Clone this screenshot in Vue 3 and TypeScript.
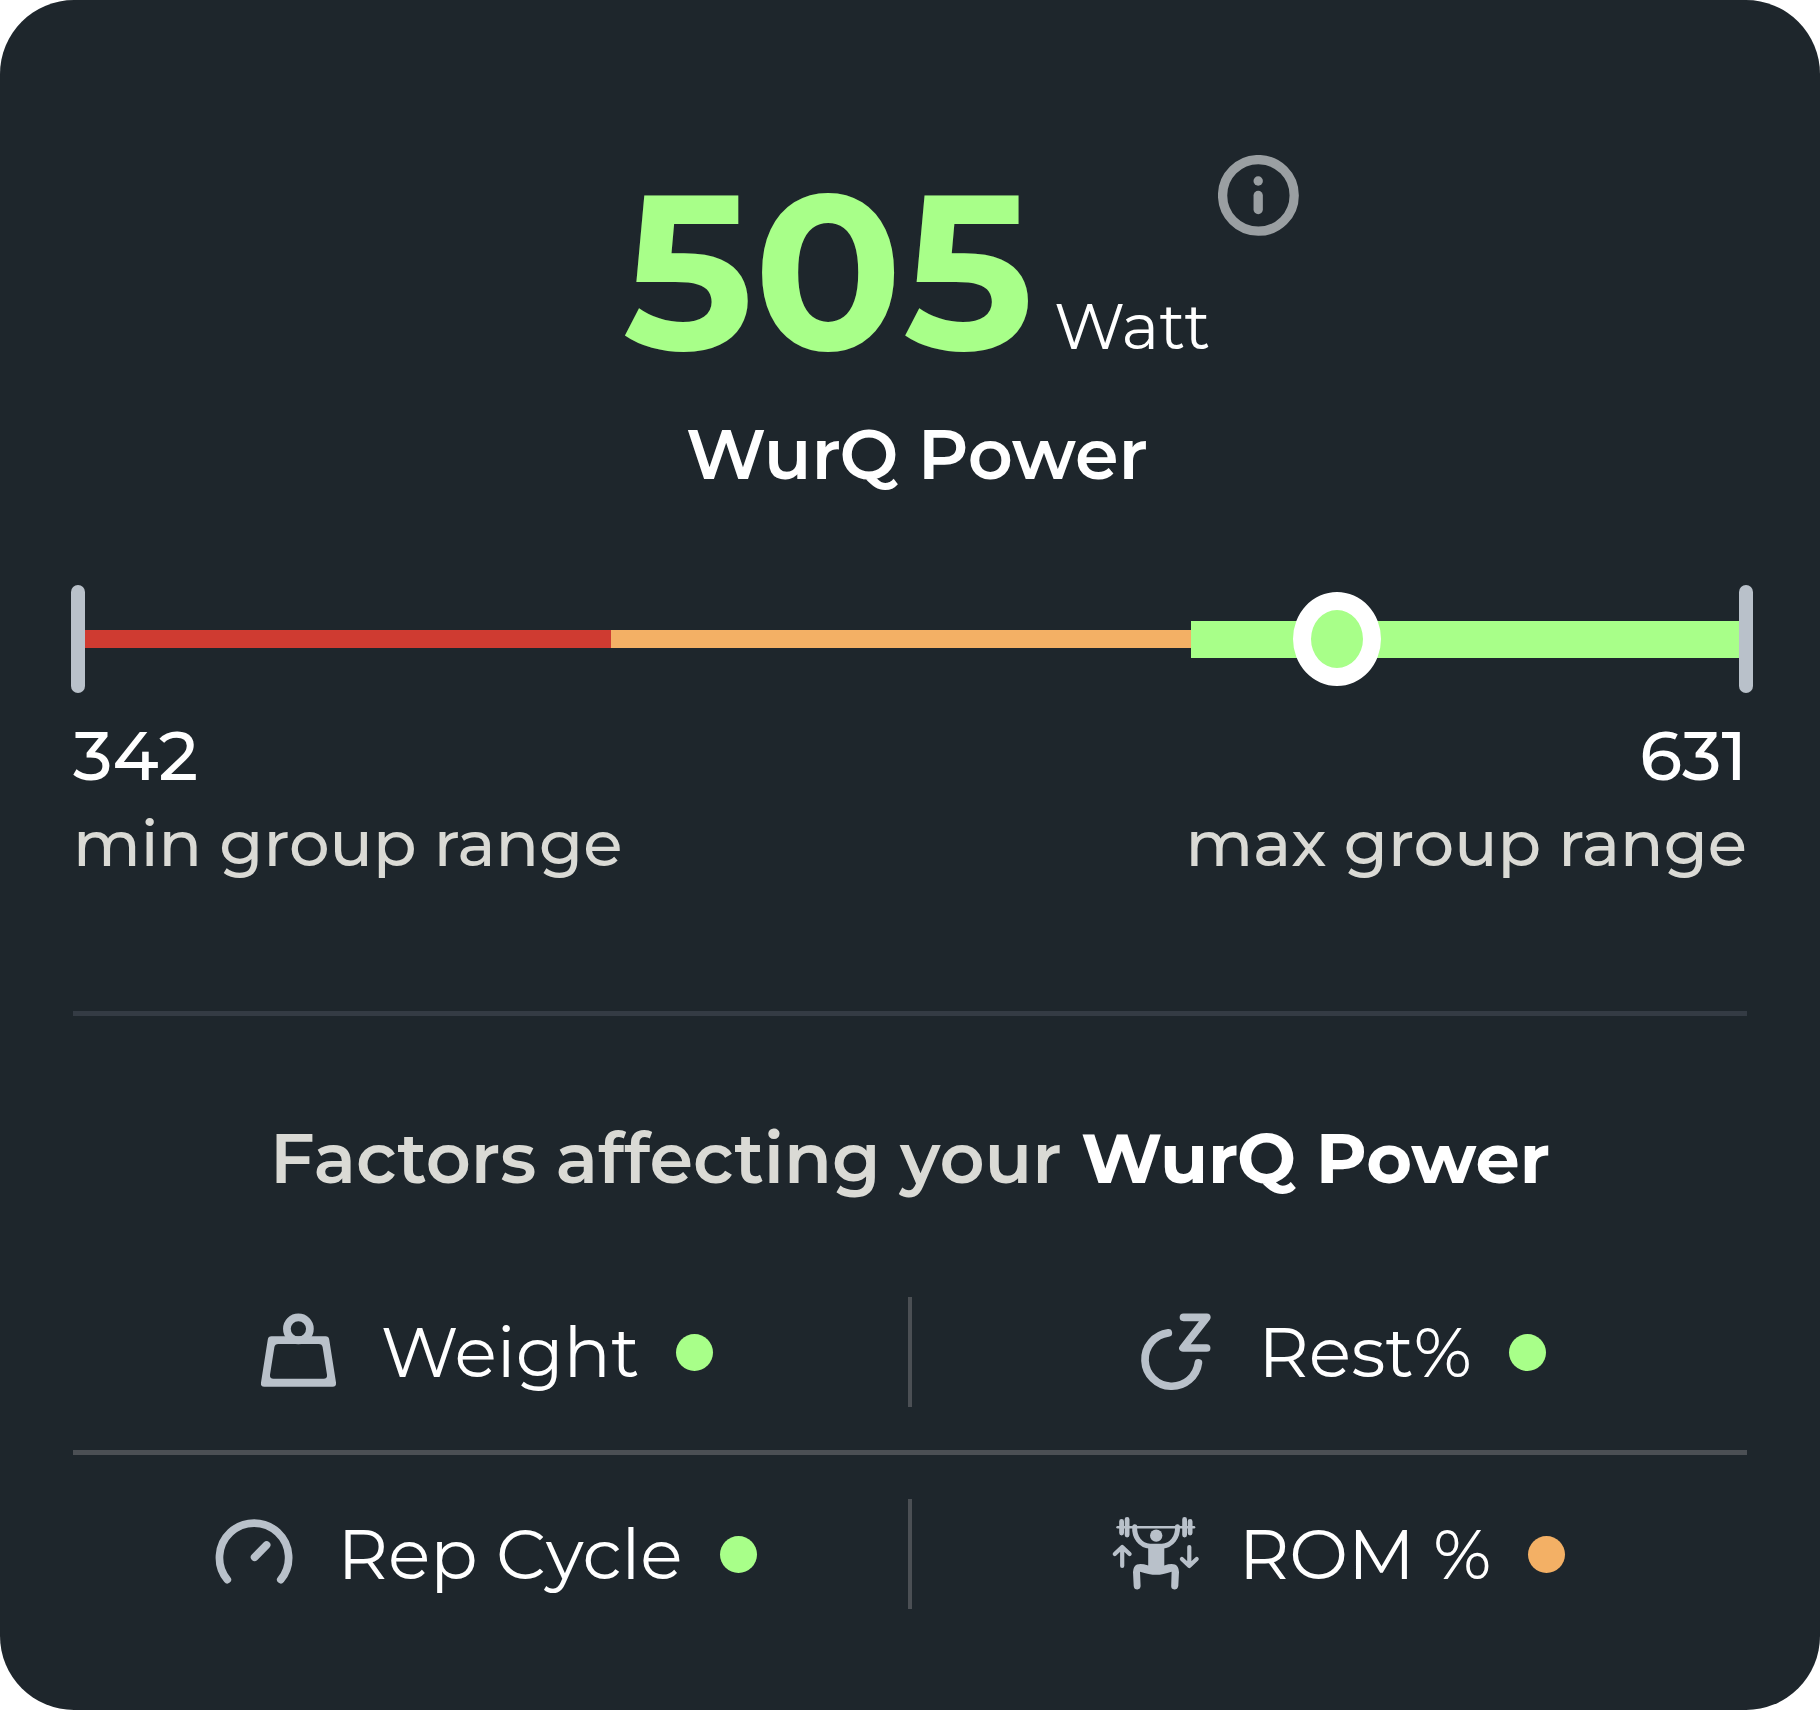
<script setup lang="ts">
type IconName = 'weight' | 'rest' | 'cycle' | 'rom'

interface Factor {
  label: string
  icon: IconName
  status: 'good' | 'fair'
}

const factorRows: Factor[][] = [
  [
    { label: 'Weight', icon: 'weight', status: 'good' },
    { label: 'Rest%', icon: 'rest', status: 'good' },
  ],
  [
    { label: 'Rep Cycle', icon: 'cycle', status: 'good' },
    { label: 'ROM %', icon: 'rom', status: 'fair' },
  ],
]

const power = 505
const range = { min: 342, max: 631 }
// Where the marker sits along the scale, in percent
const position = 76.65
</script>

<template>
  <main class="card">
    <header class="hero">
      <p class="reading">
        <span class="value">{{ power }}</span>
        <span class="unit">Watt</span>
      </p>
      <button class="info" type="button" aria-label="About WurQ Power">
        <svg viewBox="18 15 81 81" fill="none" stroke="currentColor" stroke-width="9.3" stroke-linecap="round">
          <circle cx="58.4" cy="55.4" r="35.8" />
          <circle cx="58.2" cy="41" r="4.7" fill="currentColor" stroke="none" />
          <path d="M58.2 55.5V69.5" />
        </svg>
      </button>
    </header>
    <h1 class="title">WurQ Power</h1>

    <div class="scale">
      <span class="tick"></span>
      <span class="segment low"></span>
      <span class="segment mid"></span>
      <span class="segment high"></span>
      <span class="tick"></span>
      <input class="marker" type="range" min="0" max="100" step="any" :value="position" aria-label="WurQ Power within group range" />
    </div>

    <div class="limits">
      <div class="limit">
        <span class="number">{{ range.min }}</span>
        <span class="caption">min group range</span>
      </div>
      <div class="limit end">
        <span class="number">{{ range.max }}</span>
        <span class="caption">max group range</span>
      </div>
    </div>

    <hr class="divider" />

    <h2 class="heading">Factors affecting your <strong>WurQ Power</strong></h2>

    <section class="factors">
      <template v-for="(row, index) in factorRows" :key="index">
        <hr v-if="index > 0" class="divider light" />
        <ul class="row">
          <li v-for="factor in row" :key="factor.label" class="factor">
            <svg v-if="factor.icon === 'weight'" class="icon" viewBox="12 16 92 92">
              <circle cx="58.4" cy="38.8" r="11.5" fill="none" stroke="currentColor" stroke-width="7.7" />
              <path
                fill="currentColor"
                fill-rule="evenodd"
                d="M31.5 46.3H85.5Q88.7 46.3 89.2 49.5L96 92.5Q96.5 96.8 92.5 96.8H24.3Q20.4 96.8 21 92.5L27.8 49.5Q28.3 46.3 31.5 46.3ZM38.3 54Q35 54 34.4 57L30 84.8Q29.5 88.7 33.5 88.7H83.5Q87.5 88.7 87 84.8L82.6 57Q82 54 78.7 54Z"
              />
            </svg>
            <svg v-else-if="factor.icon === 'rest'" class="icon" viewBox="9 16 92 92" fill="none" stroke="currentColor" stroke-width="7.7" stroke-linecap="round" stroke-linejoin="round">
              <path d="M48.3 42.9A26.8 26.8 0 1 0 78.4 72.8" />
              <path d="M63.5 27.3H86.8L63 58H86.6" />
            </svg>
            <svg v-else-if="factor.icon === 'cycle'" class="icon" viewBox="9 8 92 92" fill="none" stroke="currentColor" stroke-width="7.7" stroke-linecap="round">
              <path d="M28.3 79.6A34.6 34.6 0 1 1 81.8 79.6" />
              <path d="M55.6 57.2L67.6 45" />
            </svg>
            <svg v-else class="icon" viewBox="11 8 92 92" fill="none" stroke="currentColor" stroke-linecap="round" stroke-linejoin="round">
              <path stroke-width="2.6" d="M18.6 27.3H95" />
              <path stroke-width="4.8" d="M22.6 21.5V33M28.1 19.5V35M85.6 19.5V35M91.1 21.5V33" />
              <path stroke-width="5" d="M35.7 26.7C35 37 41 45.5 51 46.3H63C73 45.5 79 37 78.5 26.7" />
              <circle cx="57.2" cy="35.6" r="6.2" fill="currentColor" stroke="none" />
              <path fill="currentColor" stroke="none" d="M49.2 44H65.3V65.5Q72 63.3 76 64.6Q79.5 66 80 72L79.3 86Q78.5 89.6 75.3 89.5Q72 89 72.2 86L72.6 71.7Q64 74.8 57.2 74.8Q50 74.8 41 71.7L41.6 86Q41.5 89 38.4 89.5Q35 89.5 34.7 86L34 72Q34.5 66 38 64.6Q42 63.3 49.2 65.5Z" />
              <path stroke-width="4.2" d="M23.2 66V47.5M15.8 54L23.2 47L30.6 54M90.3 47V66M82.9 59L90.3 66L97.7 59" />
            </svg>
            <span class="name">{{ factor.label }}</span>
            <span class="dot" :class="factor.status"></span>
          </li>
        </ul>
      </template>
    </section>
  </main>
</template>

<style>
body {
  margin: 0;
  background: #ffffff;
}
</style>

<style scoped>
.card {
  box-sizing: border-box;
  min-height: 100vh;
  padding: 155px 73px 96px;
  border-radius: 74px;
  background: #1e262c;
  color: #ffffff;
  font-family: Montserrat, Inter, sans-serif;
}

.hero {
  display: flex;
  justify-content: center;
  align-items: flex-start;
  gap: 8px;
  padding-left: 102px;
}

.reading {
  display: flex;
  align-items: baseline;
  gap: 20px;
  margin: 35px 0 0;
}

.value {
  color: #a8ff89;
  font-size: 220px;
  font-weight: 700;
  line-height: 160px;
}

.unit {
  font-size: 64px;
  font-weight: 400;
  line-height: 48px;
}

.info {
  width: 81px;
  height: 81px;
  padding: 0;
  border: 0;
  background: none;
  color: #9a9fa2;
}

.info svg {
  display: block;
}

.title {
  margin: 64px 0 0;
  padding-left: 14px;
  font-size: 70px;
  font-weight: 600;
  line-height: 80px;
  text-align: center;
}

.scale {
  position: relative;
  display: flex;
  align-items: center;
  height: 108px;
  margin: 91px -6px 0 -2px;
}

.tick {
  width: 14px;
  height: 108px;
  border-radius: 7px;
  background: #b9c1ca;
}

.segment {
  height: 18px;
}

.low {
  flex: 526;
  background: #cf3b31;
}

.mid {
  flex: 581;
  background: #f3b065;
}

.high {
  flex: 548;
  height: 37px;
  background: #a8ff89;
}

.marker {
  position: absolute;
  inset: 0;
  width: 100%;
  height: 100%;
  margin: 0;
  background: none;
  appearance: none;
}

.marker::-webkit-slider-thumb {
  box-sizing: border-box;
  width: 88px;
  height: 94px;
  border: 18px solid #ffffff;
  border-radius: 50%;
  background: #a8ff89;
  appearance: none;
}

.limits {
  display: flex;
  justify-content: space-between;
  margin-top: 26px;
}

.limit {
  display: flex;
  flex-direction: column;
  gap: 12px;
}

.end {
  align-items: flex-end;
}

.number {
  font-size: 69px;
  font-weight: 500;
  line-height: 72px;
}

.caption {
  color: #dadad5;
  font-size: 64px;
  font-weight: 500;
  line-height: 80px;
}

.divider {
  height: 5px;
  margin: 128px 0 0;
  border: 0;
  background: #343b44;
}

.heading {
  margin: 102px 0 0;
  color: #dadad5;
  font-size: 70px;
  font-weight: 600;
  line-height: 80px;
  text-align: center;
}

.heading strong {
  color: #ffffff;
  font-weight: 700;
}

.factors {
  margin-top: 99px;
}

.light {
  margin: 43px 0 44px;
  background: #4b4f54;
}

.row {
  display: flex;
  margin: 0 -16px;
  padding: 0;
  list-style: none;
}

.factor {
  box-sizing: border-box;
  display: flex;
  flex: 1;
  justify-content: center;
  align-items: center;
  gap: 37px;
  height: 110px;
}

.factor + .factor {
  border-left: 4px solid #4b4f54;
}

.icon {
  width: 92px;
  height: 92px;
  color: #b9c1ca;
}

.name {
  font-size: 70px;
  font-weight: 400;
  line-height: 80px;
}

.dot {
  width: 37px;
  height: 37px;
  border-radius: 50%;
}

.good {
  background: #a8ff89;
}

.fair {
  background: #f3b065;
}
</style>
